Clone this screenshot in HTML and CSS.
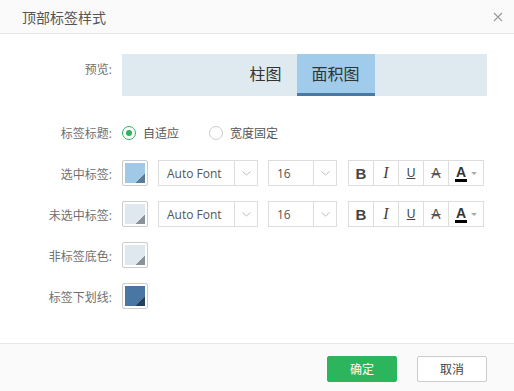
FILE: index.html
```html
<!DOCTYPE html>
<html lang="zh">
<head>
    <meta charset="utf-8">
    <title>顶部标签样式</title>
    <link rel="stylesheet" href="styles.css">
</head>
<body>
    <div class="dialog">
        <div class="header">
            <span class="title">顶部标签样式</span>
            <svg class="close" width="10" height="10" viewBox="0 0 10 10"><path d="M1 1L9 9M9 1L1 9" stroke="#999" stroke-width="1.1"/></svg>
        </div>

        <div class="content">
            <div class="row row-preview">
                <div class="label">预览:</div>
                <div class="preview">
                    <div class="tab">柱图</div>
                    <div class="tab tab-active">面积图</div>
                </div>
            </div>

            <div class="row">
                <div class="label">标签标题:</div>
                <label class="radio checked"><span class="dot"></span>自适应</label>
                <label class="radio"><span class="dot"></span>宽度固定</label>
            </div>

            <div class="row">
                <div class="label">选中标签:</div>
                <div class="swatch"><div class="fill fill-sel"></div></div>
                <div class="select select-font">
                    <span class="value">Auto Font</span>
                    <span class="arrow"><svg width="9" height="5" viewBox="0 0 9 5"><path d="M0.5 0.5L4.5 4L8.5 0.5" fill="none" stroke="#bbb"/></svg></span>
                </div>
                <div class="select select-size">
                    <span class="value">16</span>
                    <span class="arrow"><svg width="9" height="5" viewBox="0 0 9 5"><path d="M0.5 0.5L4.5 4L8.5 0.5" fill="none" stroke="#bbb"/></svg></span>
                </div>
                <div class="toolbar">
                    <span class="tool tool-b">B</span>
                    <span class="tool tool-i">I</span>
                    <span class="tool tool-u">U</span>
                    <span class="tool tool-s">A</span>
                    <span class="tool tool-color"><span class="letter">A</span><span class="caret"></span></span>
                </div>
            </div>

            <div class="row">
                <div class="label">未选中标签:</div>
                <div class="swatch"><div class="fill fill-unsel"></div></div>
                <div class="select select-font">
                    <span class="value">Auto Font</span>
                    <span class="arrow"><svg width="9" height="5" viewBox="0 0 9 5"><path d="M0.5 0.5L4.5 4L8.5 0.5" fill="none" stroke="#bbb"/></svg></span>
                </div>
                <div class="select select-size">
                    <span class="value">16</span>
                    <span class="arrow"><svg width="9" height="5" viewBox="0 0 9 5"><path d="M0.5 0.5L4.5 4L8.5 0.5" fill="none" stroke="#bbb"/></svg></span>
                </div>
                <div class="toolbar">
                    <span class="tool tool-b">B</span>
                    <span class="tool tool-i">I</span>
                    <span class="tool tool-u">U</span>
                    <span class="tool tool-s">A</span>
                    <span class="tool tool-color"><span class="letter">A</span><span class="caret"></span></span>
                </div>
            </div>

            <div class="row">
                <div class="label">非标签底色:</div>
                <div class="swatch"><div class="fill fill-bg"></div></div>
            </div>

            <div class="row">
                <div class="label">标签下划线:</div>
                <div class="swatch"><div class="fill fill-line"></div></div>
            </div>
        </div>

        <div class="footer">
            <button class="btn btn-ok">确定</button>
            <button class="btn btn-cancel">取消</button>
        </div>
    </div>
</body>
</html>
```

FILE: styles.css
```css
body{
    margin: 0;
    font-family: "Open Sans", "Noto Sans CJK SC", sans-serif;
    background: #fff;
}
.dialog{
    width: 514px;
    height: 391px;
    background: #fff;
}

.header{
    height: 33px;
    border-bottom: 1px solid #e8e8e8;
    background: #fafafa;
    display: flex;
    align-items: center;
    justify-content: space-between;
    padding: 0 11px 0 22px;
}
.title{
    font-size: 14px;
    color: #555;
}
.close{
    display: block;
}

.content{
    height: 309px;
    box-sizing: border-box;
    padding-top: 20px;
}
.row{
    display: flex;
    align-items: center;
    height: 26px;
    margin-bottom: 15px;
}
.label{
    width: 122px;
    box-sizing: border-box;
    padding-right: 10px;
    padding-top: 1px;
    text-align: right;
    font-size: 12px;
    color: #707070;
}

.row-preview{
    height: 42px;
    align-items: flex-start;
    margin-bottom: 23px;
}
.row-preview .label{
    padding-top: 6px;
}
.preview{
    width: 365px;
    height: 42px;
    background: #dfe9f0;
    display: flex;
    justify-content: center;
}
.tab{
    padding: 0 15px;
    height: 42px;
    line-height: 41px;
    box-sizing: border-box;
    border-bottom: 3px solid transparent;
    font-size: 16px;
    color: #333;
}
.tab-active{
    background: #a0cbea;
    border-bottom-color: #4b79a6;
}

.radio{
    display: flex;
    align-items: center;
    font-size: 12px;
    color: #555;
    margin-right: 30px;
    padding-top: 1px;
}
.dot{
    width: 12px;
    height: 12px;
    border: 1px solid #ccc;
    border-radius: 50%;
    margin-right: 7px;
    position: relative;
}
.radio.checked .dot{
    border-color: #2db55d;
}
.radio.checked .dot::after{
    content: "";
    position: absolute;
    left: 3px;
    top: 3px;
    width: 6px;
    height: 6px;
    border-radius: 50%;
    background: #2db55d;
}

.swatch{
    width: 26px;
    height: 26px;
    box-sizing: border-box;
    border: 1px solid #ccc;
    border-radius: 2px;
    padding: 2px;
    margin-right: 10px;
}
.fill{
    width: 20px;
    height: 20px;
}
.fill-sel{
    background: linear-gradient(135deg, #a0c9e8 76%, #5b7b96 76%);
}
.fill-unsel{
    background: linear-gradient(135deg, #dfe8ef 76%, #8c9299 76%);
}
.fill-bg{
    background: linear-gradient(135deg, #dfe8ef 76%, #8c9299 76%);
}
.fill-line{
    background: linear-gradient(135deg, #4a76a3 76%, #263f59 76%);
}

.select{
    height: 26px;
    box-sizing: border-box;
    border: 1px solid #ddd;
    display: flex;
    margin-right: 10px;
}
.select-font{
    width: 100px;
}
.select-size{
    width: 69px;
    margin-right: 11px;
}
.value{
    flex: 1;
    line-height: 25px;
    padding-left: 8px;
    font-size: 12px;
    color: #555;
}
.arrow{
    width: 22px;
    border-left: 1px solid #ddd;
    display: flex;
    align-items: center;
    justify-content: center;
}

.toolbar{
    display: flex;
    height: 26px;
    box-sizing: border-box;
    border: 1px solid #ddd;
}
.tool{
    width: 25px;
    border-right: 1px solid #ddd;
    box-sizing: border-box;
    display: flex;
    align-items: center;
    justify-content: center;
    color: #444;
    font-family: "Liberation Sans", sans-serif;
}
.tool-b{
    font-weight: bold;
    font-size: 15px;
}
.tool-i{
    font-family: "Liberation Serif", serif;
    font-style: italic;
    font-size: 16px;
}
.tool-u{
    text-decoration: underline;
    font-size: 12px;
}
.tool-s{
    text-decoration: line-through;
    font-size: 14px;
    color: #555;
}
.tool-color{
    width: 34px;
    border-right: none;
}
.letter{
    font-weight: bold;
    font-size: 14px;
    line-height: 14px;
    border-bottom: 3px solid #000;
    padding: 0 1px;
    color: #333;
}
.caret{
    width: 0;
    height: 0;
    border-left: 3px solid transparent;
    border-right: 3px solid transparent;
    border-top: 3px solid #aaa;
    margin-left: 4px;
}

.footer{
    height: 48px;
    box-sizing: border-box;
    border-top: 1px solid #e8e8e8;
    background: #fafafa;
    display: flex;
    justify-content: flex-end;
    gap: 20px;
    padding: 12px 27px 0 0;
}
.btn{
    width: 70px;
    height: 26px;
    font-family: "Open Sans", "Noto Sans CJK SC", sans-serif;
    font-size: 12px;
    border-radius: 2px;
    padding: 0;
}
.btn-ok{
    background: #2db55d;
    border: 1px solid #2db55d;
    color: #fff;
}
.btn-cancel{
    background: #fff;
    border: 1px solid #ccc;
    color: #444;
}
```
